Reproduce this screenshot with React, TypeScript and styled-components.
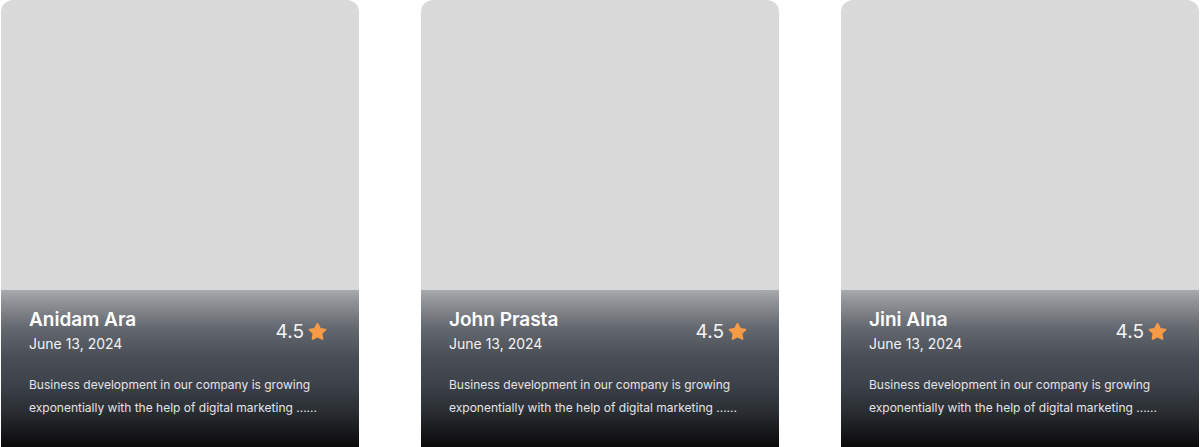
import React from "react";
import styled, { createGlobalStyle } from "styled-components";

const Global = createGlobalStyle`
  html, body { margin: 0; padding: 0; background: #ffffff; }
  body { font-family: Inter, "Noto Sans", sans-serif; overflow: hidden; }
`;

const Row = styled.div`
  display: flex;
  gap: 62px;
  padding: 0 1px;
  height: 447px;
  overflow: hidden;
`;

const Card = styled.article`
  width: 358px;
  height: 447px;
  flex: none;
  display: flex;
  flex-direction: column;
  border-radius: 12px 12px 0 0;
  background: #d9d9d9;
  overflow: hidden;
`;

const Photo = styled.div`
  height: 290px;
  flex: none;
`;

const Info = styled.div`
  flex: 1;
  padding: 18px 31px 0 28px;
  background: linear-gradient(
    180deg,
    #a8aaad 0%,
    #8e9195 8%,
    #62666d 25%,
    #474c54 45%,
    #3f444c 58%,
    #2c3035 76%,
    #17181a 90%,
    #0b0b0b 100%
  );
  color: #ffffff;
`;

const Header = styled.div`
  display: flex;
  align-items: center;
  justify-content: space-between;
`;

const Who = styled.div`
  display: flex;
  flex-direction: column;
  gap: 3px;
`;

const Name = styled.h3`
  margin: 0;
  font-size: 19px;
  line-height: 24px;
  font-weight: 600;
  color: #ffffff;
`;

const DateText = styled.span`
  font-size: 14px;
  line-height: 18px;
  font-weight: 400;
  color: #f2f2f2;
`;

const Rating = styled.div`
  display: flex;
  align-items: center;
  gap: 3px;
  font-size: 19px;
  font-weight: 400;
  color: #f4f4f4;
  margin-top: 2px;
`;

const Desc = styled.p`
  margin: 20px 0 0;
  font-size: 12px;
  line-height: 23px;
  color: #e4e4e6;
  white-space: nowrap;
`;

const Star = () => (
  <svg width="21" height="21" viewBox="0 0 24 24" aria-hidden>
    <path
      d="M12 2.2c.5 0 .9.3 1.1.7l2.5 5.1 5.6.8c.9.1 1.3 1.3.6 1.9l-4.1 4 1 5.6c.2.9-.8 1.6-1.6 1.2L12 18.8l-5.1 2.7c-.8.4-1.8-.3-1.6-1.2l1-5.6-4.1-4c-.7-.6-.3-1.8.6-1.9l5.6-.8 2.5-5.1c.2-.4.6-.7 1.1-.7z"
      fill="#f79a46"
    />
  </svg>
);

const people = [
  { name: "Anidam Ara", date: "June 13, 2024", rating: "4.5" },
  { name: "John Prasta", date: "June 13, 2024", rating: "4.5" },
  { name: "Jini Alna", date: "June 13, 2024", rating: "4.5" },
];

export default function App() {
  return (
    <>
      <Global />
      <Row>
        {people.map((p) => (
          <Card key={p.name}>
            <Photo />
            <Info>
              <Header>
                <Who>
                  <Name>{p.name}</Name>
                  <DateText>{p.date}</DateText>
                </Who>
                <Rating>
                  {p.rating}
                  <Star />
                </Rating>
              </Header>
              <Desc>
                Business development in our company is growing
                <br />
                exponentially with the help of digital marketing ......
              </Desc>
            </Info>
          </Card>
        ))}
      </Row>
    </>
  );
}
